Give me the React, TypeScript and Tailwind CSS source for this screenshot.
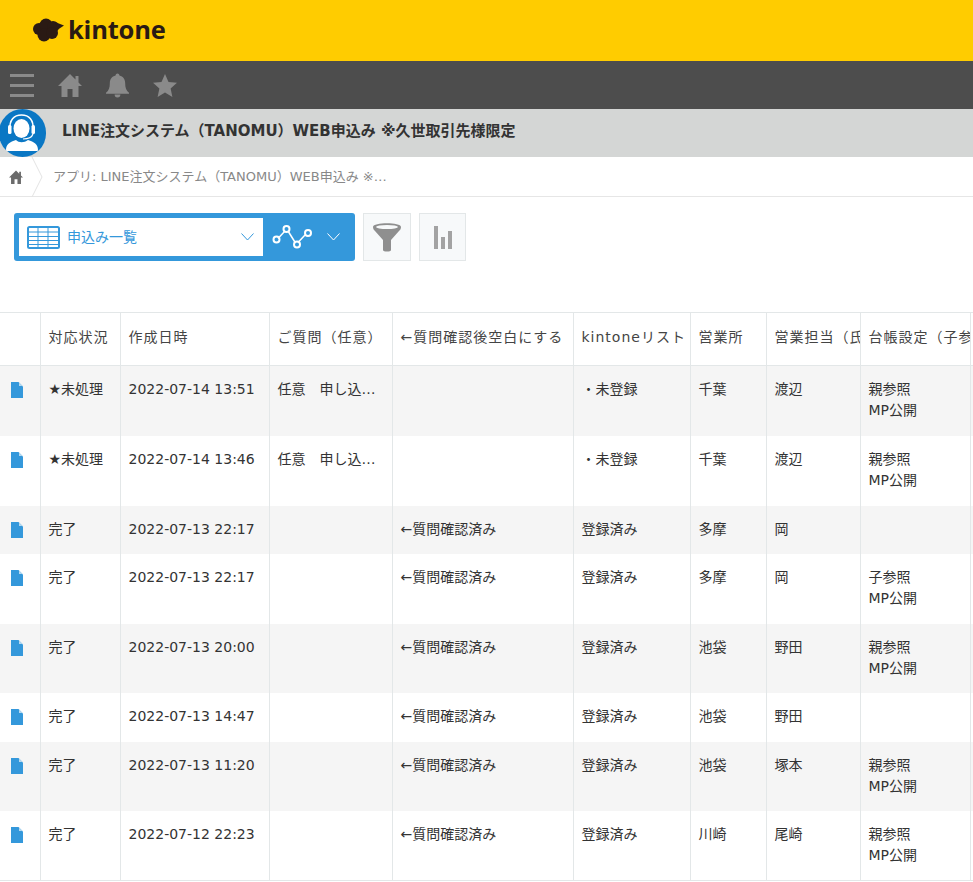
const font = "font-['DejaVu_Sans','Noto_Sans_CJK_JP',sans-serif]";

type Row = {
  height: string;
  status: string;
  date: string;
  question?: string;
  check?: string;
  list: string;
  office: string;
  staff: string;
  ledger?: string[];
};

const rows: Row[] = [
  { height: 'h-[70px]', status: '★未処理', date: '2022-07-14 13:51', question: '任意　申し込…', list: '・未登録', office: '千葉', staff: '渡辺', ledger: ['親参照', 'MP公開'] },
  { height: 'h-[70px]', status: '★未処理', date: '2022-07-14 13:46', question: '任意　申し込…', list: '・未登録', office: '千葉', staff: '渡辺', ledger: ['親参照', 'MP公開'] },
  { height: 'h-[48px]', status: '完了', date: '2022-07-13 22:17', check: '←質問確認済み', list: '登録済み', office: '多摩', staff: '岡' },
  { height: 'h-[70px]', status: '完了', date: '2022-07-13 22:17', check: '←質問確認済み', list: '登録済み', office: '多摩', staff: '岡', ledger: ['子参照', 'MP公開'] },
  { height: 'h-[69px]', status: '完了', date: '2022-07-13 20:00', check: '←質問確認済み', list: '登録済み', office: '池袋', staff: '野田', ledger: ['親参照', 'MP公開'] },
  { height: 'h-[49px]', status: '完了', date: '2022-07-13 14:47', check: '←質問確認済み', list: '登録済み', office: '池袋', staff: '野田' },
  { height: 'h-[69px]', status: '完了', date: '2022-07-13 11:20', check: '←質問確認済み', list: '登録済み', office: '池袋', staff: '塚本', ledger: ['親参照', 'MP公開'] },
  { height: 'h-[70px]', status: '完了', date: '2022-07-12 22:23', check: '←質問確認済み', list: '登録済み', office: '川崎', staff: '尾崎', ledger: ['親参照', 'MP公開'] },
];

const headers = ['', '対応状況', '作成日時', 'ご質問（任意）', '←質問確認後空白にする', 'kintoneリスト', '営業所', '営業担当（氏名）', '台帳設定（子参照）', ''];
const widths = ['w-[40px]', 'w-[80px]', 'w-[149px]', 'w-[123px]', 'w-[181px]', 'w-[117px]', 'w-[76px]', 'w-[94px]', 'w-[110px]', 'w-[3px]'];

const cell = 'border-r border-[#e3e7e8] px-[8px] pt-[13px] align-top';

const Logo = () => (
  <div className="flex items-center gap-[4px] pl-[33px]">
    <svg width="31" height="24" viewBox="0 0 31 24" className="fill-[#2a1a14]">
      <circle cx="6" cy="11" r="6" />
      <circle cx="13" cy="7" r="6.500" />
      <circle cx="20" cy="9" r="6" />
      <circle cx="11" cy="17" r="6.500" />
      <circle cx="19" cy="15" r="6" />
      <path d="M22 4l9 3.500-6 4z" />
    </svg>
    <span className="font-['Open_Sans',sans-serif] text-[25.500px] font-bold leading-none tracking-[-0.2px] text-[#2a1a14]">kintone</span>
  </div>
);

const DocIcon = () => (
  <svg width="12" height="16" viewBox="0 0 12 16" className="fill-[#3498db]">
    <path d="M0 0h7.500L12 4.500V16H0z" />
    <path d="M8 0.500v3.500h3.500z" className="fill-[#b5d9f1]" />
  </svg>
);

const Chevron = ({ className }: { className: string }) => (
  <svg width="13" height="8" viewBox="0 0 13 8" className={`fill-none ${className}`} strokeWidth="1">
    <path d="M0.500 0.500 6.500 7l6-6.500" />
  </svg>
);

export default function App() {
  return (
    <div className={`h-[882px] w-[973px] overflow-hidden bg-white ${font}`}>
      {/* Header */}
      <div className="flex h-[61px] items-center bg-[#ffcc00] pb-[1px]">
        <Logo />
      </div>

      {/* Global nav */}
      <div className="flex h-[48px] items-center bg-[#4d4d4d] pl-[10px]">
        <div className="flex w-[24px] flex-col gap-[7px]">
          <div className="h-[3px] bg-[#8a8a8a]" />
          <div className="h-[3px] bg-[#8a8a8a]" />
          <div className="h-[3px] bg-[#8a8a8a]" />
        </div>
        <svg width="24" height="24" viewBox="0 0 24 24" className="ml-[24px] fill-[#8a8a8a]">
          <path d="M12 1 0 13h3.500v11h6v-8h5v8h6V13H24l-3.500-3.500V3h-3v3.500z" />
        </svg>
        <svg width="23" height="25" viewBox="0 0 24 25" className="ml-[24px] fill-[#8a8a8a]">
          <path d="M12 0c1 0 2 1 2 2 4 1 6 4 6 8 0 5 1 8 4 10v1H0v-1c3-2 4-5 4-10 0-4 2-7 6-8 0-1 1-2 2-2zM9 22h6c0 2-1 3-3 3s-3-1-3-3z" />
        </svg>
        <svg width="24" height="23" viewBox="0 0 24 23" className="ml-[24px] fill-[#8a8a8a]">
          <path d="M12 0l3.500 8L24 8.800l-6.400 5.700L19.400 23 12 18.600 4.600 23l1.800-8.500L0 8.800 8.500 8z" />
        </svg>
      </div>

      {/* App title */}
      <div className="relative flex h-[48px] items-center bg-[#d4d6d5] pb-[3px] pl-[62px]">
        <div className="absolute left-[-1px] top-0 h-[48px] w-[47px] rounded-full bg-[#0a77c4]">
          <svg width="47" height="48" viewBox="0 0 47 48" className="fill-white">
            <ellipse cx="22.500" cy="19.500" rx="8" ry="9.500" />
            <path d="M11 21C10 11 15 6 22.500 6S35 11 34 21" className="fill-none stroke-white" strokeWidth="1.500" />
            <rect x="9" y="16" width="3.500" height="9" rx="1.500" />
            <rect x="32.500" y="16" width="3.500" height="9" rx="1.500" />
            <path d="M34 25c-1 3-5 5-10 5" className="fill-none stroke-white" strokeWidth="1.200" />
            <path d="M7 41c0-6 4-8 10-10 3 3 8 3 12 0 6 2 10 4 10 10 0 1-1 1-2 1H9c-1 0-2 0-2-1z" />
          </svg>
        </div>
        <span className="text-[15px] font-bold leading-none text-[#333333]">LINE注文システム（TANOMU）WEB申込み ※久世取引先様限定</span>
      </div>

      {/* Breadcrumb */}
      <div className="flex h-[40px] items-center border-b border-[#e6e6e6]">
        <div className="flex w-[31px] justify-center">
          <svg width="14" height="14" viewBox="0 0 24 24" className="fill-[#6b6b6b]">
            <path d="M12 1 0 13h3.500v11h6v-8h5v8h6V13H24l-3.500-3.500V3h-3v3.500z" />
          </svg>
        </div>
        <svg width="12" height="40" viewBox="0 0 12 40" className="fill-none stroke-[#e3e3e3]">
          <path d="M1 0l10 20L1 40" />
        </svg>
        <span className="ml-[10px] text-[13px] leading-none text-[#888888]">アプリ: LINE注文システム（TANOMU）WEB申込み ※…</span>
      </div>

      {/* Toolbar */}
      <div className="flex h-[115px] items-start gap-[8px] pl-[14px] pt-[16px]">
        <div className="flex h-[48px] w-[341px] items-stretch rounded-[3px] bg-[#3498db] p-[5px] pr-0">
          <div className="flex w-[244px] items-center bg-white pl-[8px]">
            <svg width="33" height="23" viewBox="0 0 33 23" className="fill-none stroke-[#3498db]">
              <rect x="1" y="1" width="31" height="21" rx="1.500" strokeWidth="2" />
              <path d="M1 6h31M1 10.500h31M1 14.500h31M1 18.500h31M11 1v21M21 1v21" strokeWidth="1" />
            </svg>
            <span className="ml-[7px] text-[14px] leading-none text-[#3498db]">申込み一覧</span>
            <Chevron className="ml-auto mr-[9px] stroke-[#3498db]" />
          </div>
          <div className="flex flex-1 items-center pl-[9px]">
            <svg width="42" height="28" viewBox="0 0 42 28" className="fill-none stroke-white" strokeWidth="2">
              <path d="M6 15.500 13 8M16 8l7.500 12M26 19.500 33 12" strokeWidth="1.500" />
              <circle cx="4.500" cy="16.500" r="3" />
              <circle cx="14.500" cy="6" r="3" />
              <circle cx="25" cy="21.500" r="3" />
              <circle cx="36" cy="10" r="3" />
            </svg>
            <Chevron className="ml-[13px] stroke-white" />
          </div>
        </div>
        <div className="flex h-[48px] w-[48px] items-center justify-center border border-[#e3e7e8] bg-[#f7f9fa]">
          <svg width="28" height="29" viewBox="0 0 28 29">
            <path d="M0 4c0-5 28-5 28 0 0 2-1 3-2 4l-8 9v10c0 2-8 2-8 0V17L2 8C1 7 0 6 0 4z" className="fill-[#8f8f8f]" />
            <ellipse cx="14" cy="4" rx="11" ry="2" className="fill-[#f7f9fa]" />
          </svg>
        </div>
        <div className="flex h-[48px] w-[47px] items-center justify-center border border-[#e3e7e8] bg-[#f7f9fa]">
          <div className="flex h-[23px] items-end gap-[3px]">
            <div className="h-[23px] w-[4px] bg-[#a3a3a3]" />
            <div className="h-[12px] w-[4px] bg-[#a3a3a3]" />
            <div className="h-[18px] w-[4px] bg-[#a3a3a3]" />
          </div>
        </div>
      </div>

      {/* Record list */}
      <table className="w-[973px] table-fixed border-collapse text-[14px] leading-[21px] text-[#333333]">
        <thead>
          <tr className="h-[53px] border-y border-[#e3e7e8]">
            {headers.map((h, i) => (
              <th key={i} className={`${widths[i]} overflow-hidden whitespace-nowrap ${i < 9 ? 'border-r border-[#e3e7e8]' : ''} pl-[8px] pb-[3px] text-left text-[14px] font-normal tracking-[1px] text-[#444444]`}>
                {h}
              </th>
            ))}
          </tr>
        </thead>
        <tbody>
          {rows.map((row, i) => (
            <tr key={i} className={`${i % 2 === 0 ? 'bg-[#f5f5f5]' : 'bg-white'} ${i === 7 ? 'border-b border-[#e3e7e8]' : ''}`}>
              <td className={`border-r border-[#e3e7e8] pl-[11px] align-top ${row.height}`}>
                <div className="pt-[16px]">
                  <DocIcon />
                </div>
              </td>
              <td className={cell}>{row.status}</td>
              <td className={cell}>{row.date}</td>
              <td className={`overflow-hidden whitespace-nowrap ${cell}`}>{row.question}</td>
              <td className={cell}>{row.check}</td>
              <td className={cell}>{row.list}</td>
              <td className={cell}>{row.office}</td>
              <td className={cell}>{row.staff}</td>
              <td className={cell}>
                {row.ledger?.map((l) => (
                  <div key={l}>{l}</div>
                ))}
              </td>
              <td />
            </tr>
          ))}
        </tbody>
      </table>
    </div>
  );
}
